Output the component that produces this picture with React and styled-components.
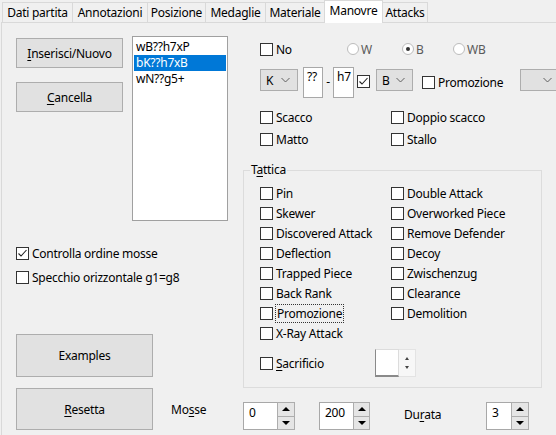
import React from 'react';
import styled, { createGlobalStyle } from 'styled-components';

const Global = createGlobalStyle`
  html, body { margin: 0; padding: 0; background: #f0f0f0; }
  body {
    font-family: "Segoe UI", "Noto Sans", sans-serif;
    font-size: 12px;
    letter-spacing: -0.25px;
    color: #000;
  }
  * { box-sizing: border-box; }
`;

const Root = styled.div`
  width: 556px;
  height: 435px;
  overflow: hidden;
  background: #f0f0f0;
  padding-left: 1px;
  display: flex;
  flex-direction: column;
`;

const TabBar = styled.div`
  display: flex;
  align-items: flex-end;
  height: 22px;
  padding-left: 2px;
  flex: none;
`;

const Tab = styled.div`
  width: ${(p) => p.$w}px;
  height: ${(p) => (p.$active ? 23 : 20)}px;
  margin-left: -1px;
  margin-bottom: ${(p) => (p.$active ? -1 : 0)}px;
  border: 1px solid #d9d9d9;
  border-bottom: none;
  background: ${(p) => (p.$active ? '#ffffff' : '#f0f0f0')};
  display: flex;
  align-items: center;
  justify-content: center;
  padding-bottom: ${(p) => (p.$active ? 3 : 0)}px;
  white-space: nowrap;
  position: relative;
  z-index: ${(p) => (p.$active ? 2 : 1)};
`;

const Panel = styled.div`
  flex: 1;
  border-top: 1px solid #d9d9d9;
  border-left: 1px solid #d9d9d9;
  display: flex;
  flex-direction: column;
`;

const Main = styled.div`
  display: flex;
  height: 365px;
  flex: none;
`;

const LeftCol = styled.div`
  margin-left: 14px;
  width: 212px;
  display: flex;
  flex-direction: column;
  flex: none;
`;

const TopRow = styled.div`
  display: flex;
  margin-top: 13px;
`;

const ButtonCol = styled.div`
  display: flex;
  flex-direction: column;
  gap: 14px;
  margin-top: 2px;
`;

const Button = styled.button`
  width: ${(p) => p.$w}px;
  height: ${(p) => p.$h}px;
  margin-left: ${(p) => p.$ml || 0}px;
  background: #e1e1e1;
  border: 1px solid #adadad;
  font: inherit;
  letter-spacing: inherit;
  color: #000;
  padding: 0;
  flex: none;
`;

const U = styled.span`
  text-decoration: underline;
  text-underline-offset: 2px;
`;

const ListBox = styled.div`
  width: 96px;
  height: 185px;
  margin-left: 9px;
  background: #fff;
  border: 1px solid #a0a0a0;
  padding: 2px 1px;
`;

const ListItem = styled.div`
  height: 16px;
  line-height: 16px;
  padding-left: 2px;
  white-space: nowrap;
  background: ${(p) => (p.$sel ? '#0078d7' : 'transparent')};
  color: ${(p) => (p.$sel ? '#fff' : '#000')};
`;

const CheckStack = styled.div`
  display: flex;
  flex-direction: column;
  gap: 4px;
  margin-top: 22px;
`;

const CheckRow = styled.label`
  display: flex;
  align-items: center;
  gap: 3px;
  height: ${(p) => p.$h || 20}px;
  width: ${(p) => (p.$w ? `${p.$w}px` : 'auto')};
  margin-top: ${(p) => p.$mt || 0}px;
  margin-left: ${(p) => p.$ml || 0}px;
  white-space: nowrap;
  flex: none;
`;

const Box = styled.span`
  width: 13px;
  height: 13px;
  border: 1px solid #333;
  background: #fff;
  flex: none;
  display: flex;
  align-items: center;
  justify-content: center;
`;

const FocusText = styled.span`
  outline: 1px dotted #333;
  outline-offset: 0px;
  padding: 0 1px;
  line-height: 15px;
`;

const ExamplesWrap = styled.div`
  margin-top: 47px;
`;

const RightCol = styled.div`
  margin-left: 15px;
  width: 313px;
  display: flex;
  flex-direction: column;
  flex: none;
`;

const RadioRow = styled.div`
  display: flex;
  align-items: center;
  height: 20px;
  margin-top: 16px;
  padding-left: 17px;
`;

const RadioItem = styled.div`
  display: flex;
  align-items: center;
  gap: 2px;
  width: ${(p) => p.$w}px;
  color: #5a5a5a;
  flex: none;
`;

const Circle = styled.span`
  width: 12px;
  height: 12px;
  border-radius: 50%;
  border: 1px solid #bcbcbc;
  background: #fff;
  display: flex;
  align-items: center;
  justify-content: center;
  &::after {
    content: '';
    width: 4px;
    height: 4px;
    border-radius: 50%;
    background: ${(p) => (p.$on ? '#333' : 'transparent')};
  }
`;

const MoveRow = styled.div`
  display: flex;
  align-items: flex-start;
  height: 31px;
  margin-top: 8px;
  padding-left: 17px;
`;

const Combo = styled.div`
  width: ${(p) => p.$w}px;
  height: 22px;
  margin-top: 2px;
  margin-left: ${(p) => p.$ml || 0}px;
  background: #e1e1e1;
  border: 1px solid #adadad;
  display: flex;
  align-items: center;
  justify-content: space-between;
  padding: 0 7px 0 5px;
  flex: none;
`;

const Edit = styled.div`
  width: ${(p) => p.$w}px;
  height: ${(p) => p.$h}px;
  margin-left: ${(p) => p.$ml || 0}px;
  background: #fff;
  border: 1px solid #a8a8a8;
  padding: ${(p) => p.$pad || '1px 3px'};
  line-height: 16px;
  white-space: nowrap;
  flex: none;
`;

const Dash = styled.div`
  width: 10px;
  text-align: center;
  margin-top: 7px;
  line-height: 16px;
  flex: none;
`;

const CheckGrid = styled.div`
  display: grid;
  grid-template-columns: 131px 1fr;
  row-gap: 2px;
  margin-top: 9px;
  padding-left: 17px;
`;

const Group = styled.div`
  margin-top: 21px;
  width: 299px;
  height: 218px;
  border: 1px solid #dcdcdc;
  display: flex;
  flex-direction: column;
`;

const GroupTitle = styled.div`
  margin-top: -9px;
  margin-left: 6px;
  padding: 0 1px;
  line-height: 16px;
  background: #f0f0f0;
  align-self: flex-start;
`;

const TacticGrid = styled.div`
  display: grid;
  grid-template-columns: 131px 1fr;
  grid-template-rows: repeat(8, 20px);
  grid-auto-flow: column;
  margin-top: 5px;
  padding-left: 16px;
`;

const SacrRow = styled.div`
  display: flex;
  align-items: center;
  height: 28px;
  margin-top: 6px;
  padding-left: 16px;
`;

const SmallSpin = styled.div`
  display: flex;
  height: 28px;
`;

const SmallEdit = styled.div`
  width: 24px;
  height: 28px;
  background: #fff;
  border: 1px solid #dcdcdc;
  border-left-color: #8a8a8a;
  border-bottom: 2px solid #8a8a8a;
`;

const SmallArrows = styled.div`
  width: 17px;
  background: #f7f7f7;
  border: 1px solid #e3e3e3;
  border-left: none;
  display: flex;
  flex-direction: column;
  align-items: center;
  justify-content: space-around;
  padding: 4px 0;
`;

const Tri = styled.span`
  width: 0;
  height: 0;
  border-left: ${(p) => p.$s}px solid transparent;
  border-right: ${(p) => p.$s}px solid transparent;
  ${(p) =>
    p.$down
      ? `border-top: ${p.$t}px solid ${p.$c || '#000'};`
      : `border-bottom: ${p.$t}px solid ${p.$c || '#000'};`}
`;

const BottomRow = styled.div`
  display: flex;
  align-items: flex-start;
  flex: 1;
  padding-left: 14px;
`;

const Label = styled.div`
  width: ${(p) => p.$w}px;
  margin-left: ${(p) => p.$ml}px;
  margin-top: ${(p) => p.$mt}px;
  line-height: 16px;
  flex: none;
`;

const Spin = styled.div`
  display: flex;
  height: 28px;
  margin-top: 14px;
  margin-left: ${(p) => p.$ml || 0}px;
  flex: none;
`;

const SpinButtons = styled.div`
  width: ${(p) => p.$w}px;
  display: flex;
  flex-direction: column;
  margin-left: -1px;
`;

const SpinBtn = styled.div`
  flex: 1;
  background: #e5e5e5;
  border: 1px solid #adadad;
  margin-top: ${(p) => (p.$down ? -1 : 0)}px;
  display: flex;
  align-items: center;
  justify-content: center;
`;

const Chevron = () => (
  <svg width="9" height="6" viewBox="0 0 9 6">
    <path d="M0.5 1 L4.5 5 L8.5 1" fill="none" stroke="#606060" strokeWidth="1" />
  </svg>
);

const Check = ({ checked, children, ...rest }) => (
  <CheckRow {...rest}>
    <Box>
      {checked && (
        <svg width="11" height="11" viewBox="0 0 11 11">
          <path d="M1.5 5.5 L4 8 L9.5 2" fill="none" stroke="#222" strokeWidth="1.1" />
        </svg>
      )}
    </Box>
    {children != null && <span>{children}</span>}
  </CheckRow>
);

const Radio = ({ on, w, children }) => (
  <RadioItem $w={w}>
    <Circle $on={on} />
    <span>{children}</span>
  </RadioItem>
);

const Spinner = ({ value, editW, btnW, ml }) => (
  <Spin $ml={ml}>
    <Edit $w={editW} $h={28} $pad="2px 5px">{value}</Edit>
    <SpinButtons $w={btnW}>
      <SpinBtn>
        <Tri $s={4} $t={4} />
      </SpinBtn>
      <SpinBtn $down>
        <Tri $s={4} $t={4} $down />
      </SpinBtn>
    </SpinButtons>
  </Spin>
);

const tabs = [
  { label: 'Dati partita', w: 71 },
  { label: 'Annotazioni', w: 76 },
  { label: 'Posizione', w: 59 },
  { label: 'Medaglie', w: 61 },
  { label: 'Materiale', w: 60 },
  { label: 'Manovre', w: 59, active: true },
  { label: 'Attacks', w: 46 },
];

const tactics = [
  'Pin',
  'Skewer',
  'Discovered Attack',
  'Deflection',
  'Trapped Piece',
  'Back Rank',
  'Promozione',
  'X-Ray Attack',
  'Double Attack',
  'Overworked Piece',
  'Remove Defender',
  'Decoy',
  'Zwischenzug',
  'Clearance',
  'Demolition',
];

export default function App() {
  return (
    <>
      <Global />
      <Root>
        <TabBar>
          {tabs.map((t) => (
            <Tab key={t.label} $w={t.w} $active={t.active}>
              {t.label}
            </Tab>
          ))}
        </TabBar>
        <Panel>
          <Main>
            <LeftCol>
              <TopRow>
                <ButtonCol>
                  <Button $w={107} $h={30}>
                    <U>I</U>nserisci/Nuovo
                  </Button>
                  <Button $w={107} $h={30}>
                    <U>C</U>ancella
                  </Button>
                </ButtonCol>
                <ListBox>
                  <ListItem>wB??h7xP</ListItem>
                  <ListItem $sel>bK??h7xB</ListItem>
                  <ListItem>wN??g5+</ListItem>
                </ListBox>
              </TopRow>
              <CheckStack>
                <Check checked>Controlla ordine mosse</Check>
                <Check>Specchio orizzontale g1=g8</Check>
              </CheckStack>
              <ExamplesWrap>
                <Button $w={137} $h={43}>Examples</Button>
              </ExamplesWrap>
            </LeftCol>

            <RightCol>
              <RadioRow>
                <Check $w={87}>No</Check>
                <Radio w={55}>W</Radio>
                <Radio w={51} on>
                  B
                </Radio>
                <Radio w={60}>WB</Radio>
              </RadioRow>

              <MoveRow>
                <Combo $w={38}>
                  <span>K</span>
                  <Chevron />
                </Combo>
                <Edit $w={20} $h={31} $ml={5}>??</Edit>
                <Dash>-</Dash>
                <Edit $w={21} $h={31}>h7</Edit>
                <Check checked $h={13} $mt={8} $ml={3} />
                <Combo $w={37} $ml={6}>
                  <span>B</span>
                  <Chevron />
                </Combo>
                <Check $w={98} $h={20} $mt={5} $ml={9}>
                  Promozione
                </Check>
                <Combo $w={40}>
                  <span />
                  <Chevron />
                </Combo>
              </MoveRow>

              <CheckGrid>
                <Check>Scacco</Check>
                <Check>Doppio scacco</Check>
                <Check>Matto</Check>
                <Check>Stallo</Check>
              </CheckGrid>

              <Group>
                <GroupTitle>
                  T<U>a</U>ttica
                </GroupTitle>
                <TacticGrid>
                  {tactics.map((t) => (
                    <Check key={t}>
                      {t === 'Promozione' ? <FocusText>{t}</FocusText> : t}
                    </Check>
                  ))}
                </TacticGrid>
                <SacrRow>
                  <Check $w={115}>
                    <U>S</U>acrificio
                  </Check>
                  <SmallSpin>
                    <SmallEdit />
                    <SmallArrows>
                      <Tri $s={2} $t={3} $c="#444" />
                      <Tri $s={2} $t={3} $c="#444" $down />
                    </SmallArrows>
                  </SmallSpin>
                </SacrRow>
              </Group>
            </RightCol>
          </Main>

          <BottomRow>
            <Button $w={137} $h={42}>
              <U>R</U>esetta
            </Button>
            <Label $w={72} $ml={18} $mt={14}>
              Mo<U>s</U>se
            </Label>
            <Spinner value="0" editW={35} btnW={18} />
            <Spinner value="200" editW={35} btnW={17} ml={24} />
            <Label $w={82} $ml={34} $mt={19}>
              Du<U>r</U>ata
            </Label>
            <Spinner value="3" editW={26} btnW={18} />
          </BottomRow>
        </Panel>
      </Root>
    </>
  );
}
